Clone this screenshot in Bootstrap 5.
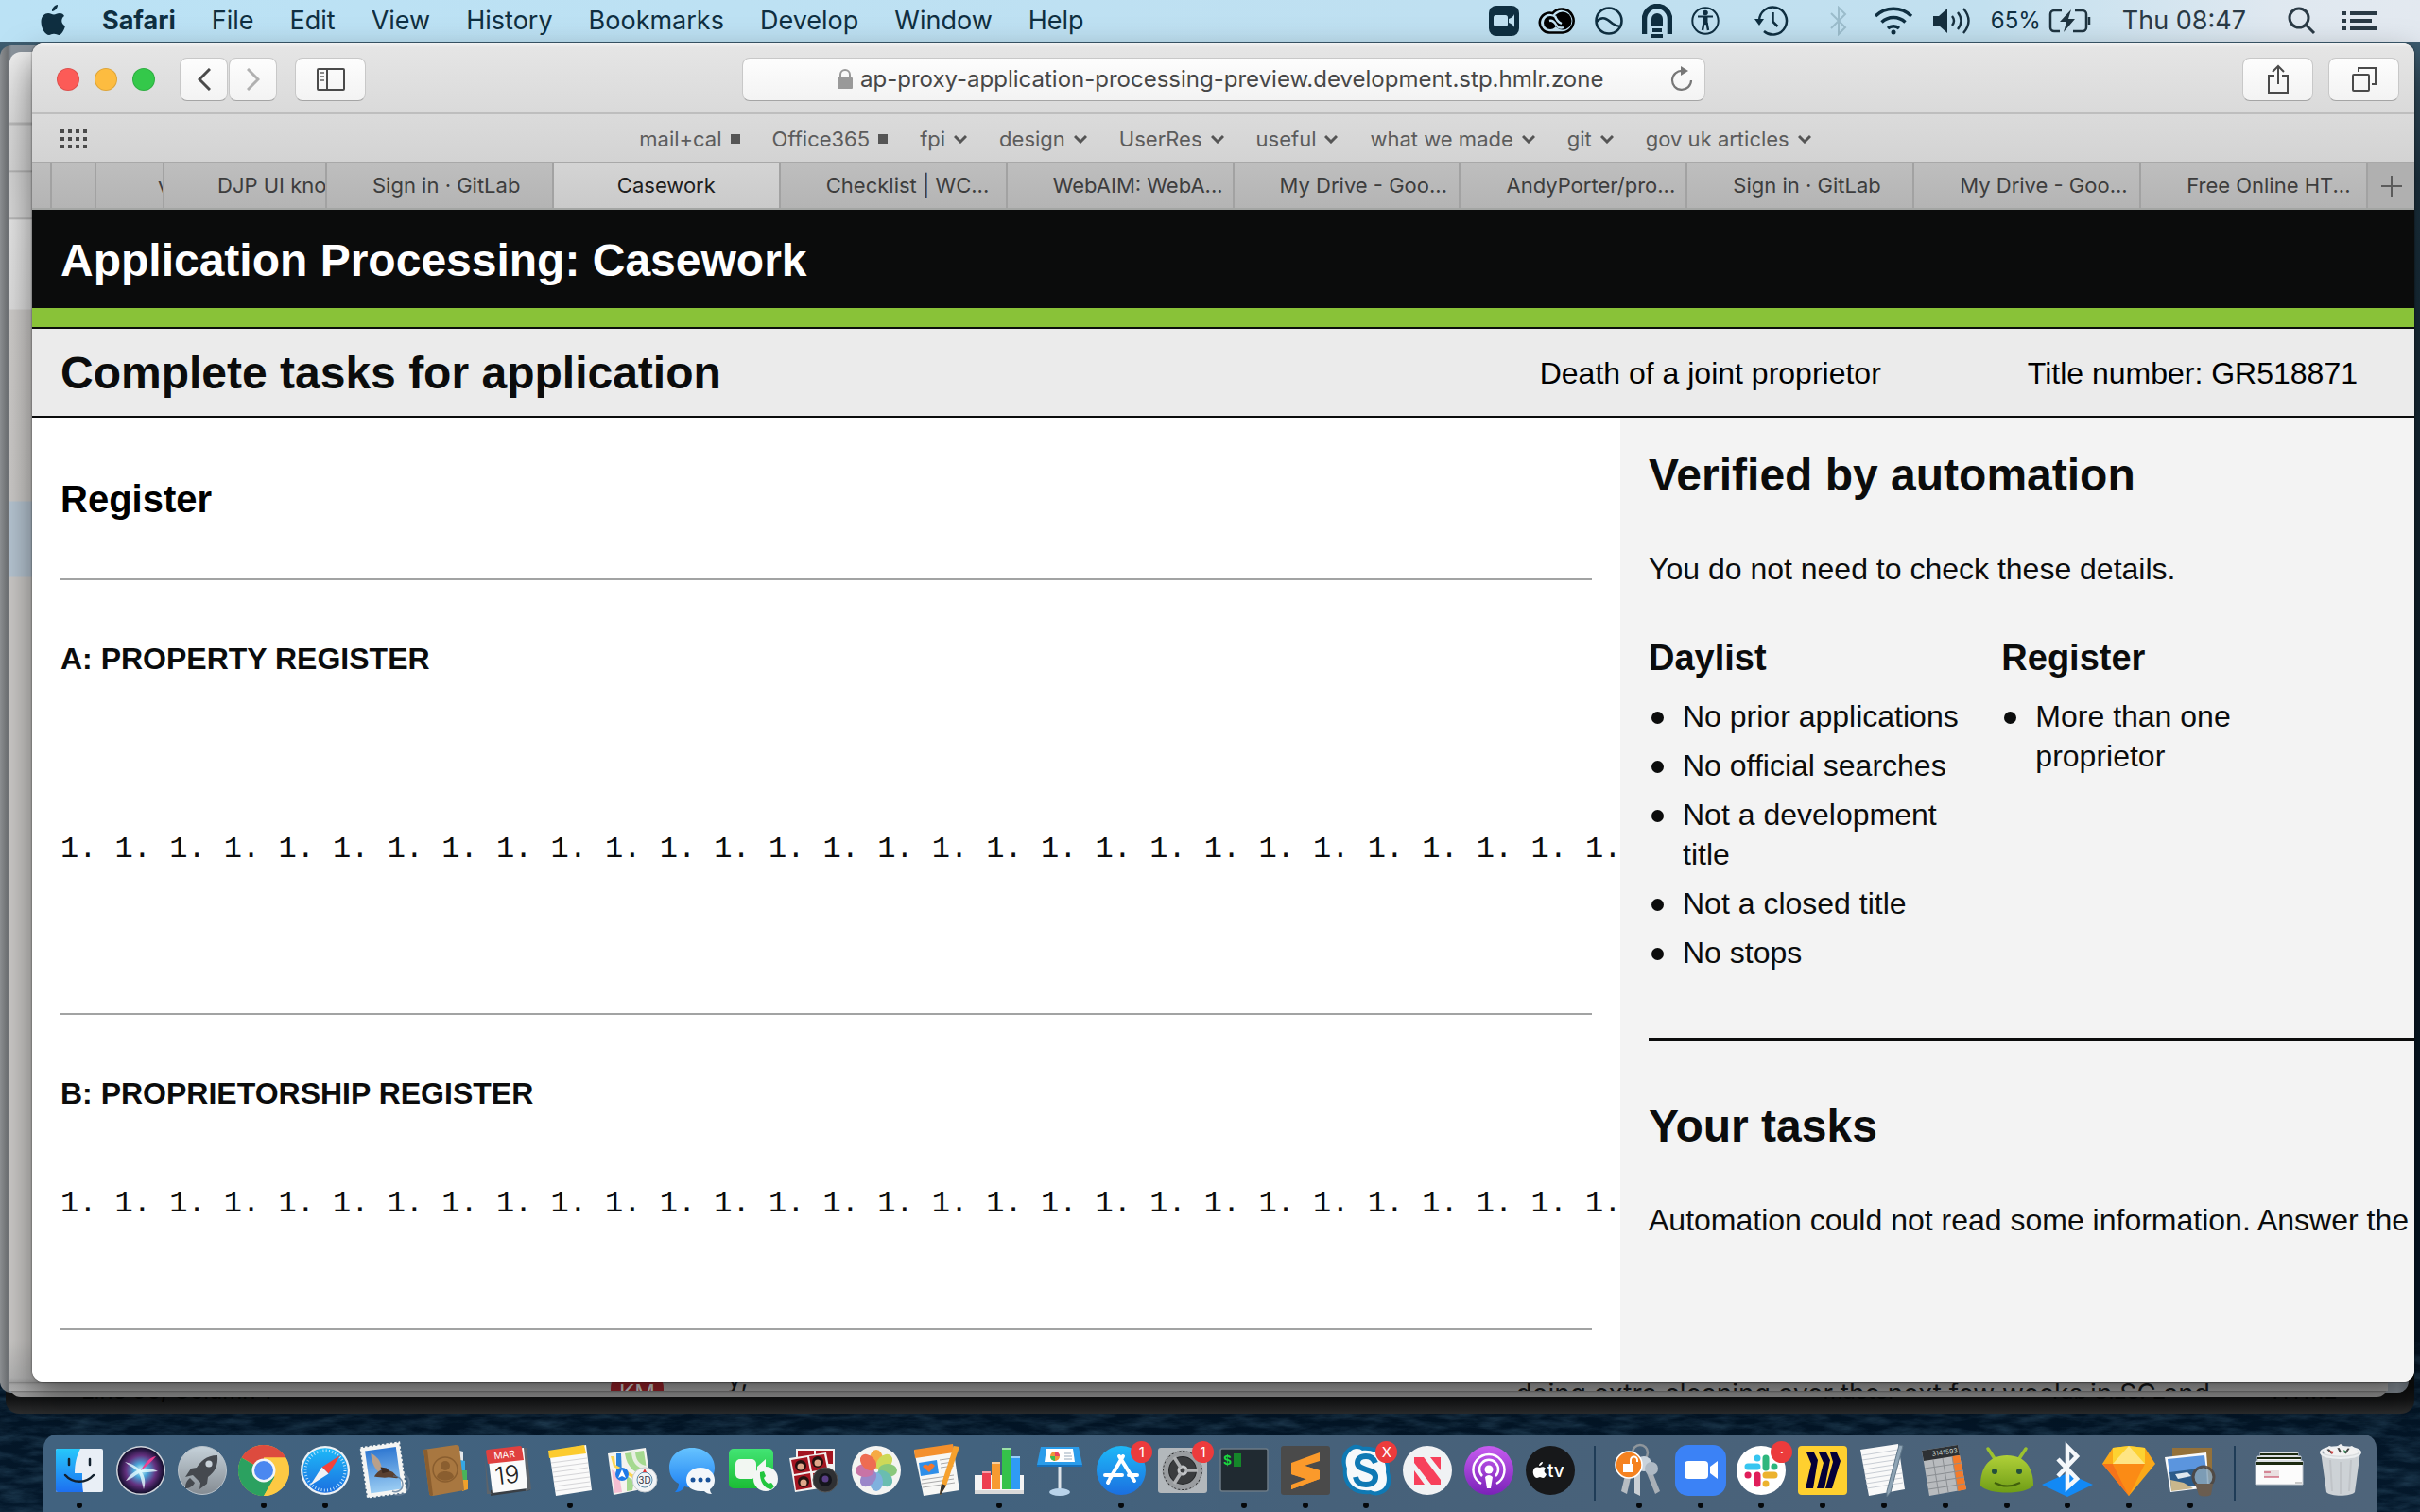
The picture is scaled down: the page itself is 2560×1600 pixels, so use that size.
<!DOCTYPE html>
<html lang="en">
<head>
<meta charset="utf-8">
<meta name="viewport" content="width=device-width, initial-scale=1">
<title>Casework</title>
<link href="https://cdn.jsdelivr.net/npm/bootstrap@5.3.0/dist/css/bootstrap.min.css" rel="stylesheet">
<style>
:root{--ui:Inter,"Noto Sans",sans-serif;--doc:"Liberation Sans",Arial,sans-serif;--ink:#0b0c0c}
body{font-family:var(--ui);background:linear-gradient(180deg,#47687d 0,#1d3442 12%,#0b1a24 50%,#031424 92%,#04182b 100%);overflow:hidden}
a{color:inherit;text-decoration:none}
button{font:inherit}
svg{display:block;flex:none}
.waves{position:absolute;inset:auto 0 0 0;width:100%;height:180px}
/* menu bar */
.menubar{height:44px;padding:0 46px 0 42px;font-size:27px;line-height:44px;color:#0f2f41;background:linear-gradient(90deg,#bbe2f5 0,#bfe0f1 60%,#c2e0ef 82%,#dfe8f0 94%,#e3e9f0 100%)}
.menus{gap:38px}
.status{gap:20px}
.status .pct{font-size:24px}
.status .clock{color:#2a3a45;padding:0 24px 0 12px}
/* windows behind */
.back{position:absolute}
.b-editor{left:6px;right:6px;top:200px;bottom:22px;border-radius:0 0 14px 14px;background:#2a2b2c linear-gradient(180deg,#0c0d0d calc(100% - 28px),#151617 calc(100% - 14px),#2d2e2f);font-size:24px;line-height:24px;color:#030404}
.b-editor .bar{position:absolute;inset:auto 0 12px 0;padding:0 82px 0 80px}
.b-grey{left:0;right:12px;top:4px;bottom:44px;border-radius:12px;background:linear-gradient(90deg,#8d9093 0,#6f7275 8px,#8b949d 12px,#8b949d calc(100% - 12px),#6c757e)}
.b-mail{left:10px;right:34px;top:11px;bottom:40px;border-radius:12px;background:linear-gradient(180deg,#efefef 0,#dcdcdc 74px,#bbb 75px,#bbb 77px,#dadada 78px,#d6d6d6 125px,#aaa 126px,#d4d4d4 128px,#d8d8d8 175px,#aaa 176px,#e6e6e6 178px,#dfdfdf 272px,#cfcdcb 273px,#cccac8 475px,#b7c6d3 476px,#b7c6d3 555px,#cccac8 556px,#cccac8 calc(100% - 60px),#b4b4b4 calc(100% - 20px),#777 calc(100% - 6px),#9d9d9d calc(100% - 4px))}
.b-mail .strip{position:absolute;inset:auto 0 6px 0;height:10px;overflow:hidden;padding:0 188px 0 636px;background:linear-gradient(180deg,#888,#aaa 4px,#b0b0b0);font-size:28px;line-height:26px;color:#16181a}
.km{flex:none;width:56px;height:56px;margin-top:-20px;border-radius:50%;background:#9f242c;color:#ddd;font-size:24px;line-height:66px;text-align:center}
.peek{margin-left:67px;line-height:10px;margin-top:-9px}
/* browser window */
.stage{padding:2px 6px 56px 34px;min-height:0}
.win{border-radius:12px;overflow:hidden;background:#fff;box-shadow:0 0 2px rgba(0,0,0,.7),0 16px 36px rgba(0,0,0,.5)}
.tools{flex:none;height:75px;padding:2px 16px 0;border-bottom:2px solid #bebebe;background:linear-gradient(180deg,#f4f4f4 0,#e5e5e5 4px,#dadada)}
.side{flex:1 1 0}
.lights{gap:16px;padding:0 26px 0 10px}
.light{width:24px;height:24px;border-radius:50%;border:1px solid rgba(0,0,0,.12);padding:0}
.tbtn{height:46px;padding:0;border:1px solid #c8c8c8;border-bottom-color:#a5a5a5;border-radius:8px;background:linear-gradient(180deg,#fdfdfd,#f3f3f3);display:flex;align-items:center;justify-content:center}
.w-nav{width:51px;margin-right:1px}.w-tool{width:75px}
.w-side{margin-left:18px}
.address{flex:0 1 1019px;height:46px;padding:0 12px;border:1px solid #c8c8c8;border-bottom-color:#a5a5a5;border-radius:8px;background:linear-gradient(180deg,#fdfdfd,#f3f3f3);color:#474747;font-size:24px}
.address input{border:0;background:none;outline:0;padding:0;color:inherit;font:inherit;width:790px}
.favs{flex:none;height:50px;padding:2px 26px 0;background:linear-gradient(180deg,#dbdbdb,#d3d3d3);color:#5c5c5c;font-size:22px}
.favs nav{gap:34px;padding-right:30px}
.favs a{display:flex;align-items:center;gap:9px;white-space:nowrap}
.sq{width:10px;height:10px;background:#555}
.tabs{flex:none;height:51px;border-top:2px solid #a8a8a8;border-bottom:2px solid #a3a5a3;background:linear-gradient(180deg,#bebebe,#b4b4b4);color:#3d3d3d;font-size:22px;line-height:47px}
.tabs a{flex:1 1 0;min-width:0;overflow:hidden;white-space:nowrap;border-right:2px solid #a2a2a2;padding-left:48px}
.tabs .on{background:linear-gradient(180deg,#d4d4d4,#cacaca);color:#1d1d1d;text-align:center;padding:0 24px}
.tabs .t1{flex:0 0 21px;padding:0}.tabs .t2{flex:0 0 47px;padding:0}.tabs .t3{flex:0 0 72px;padding-left:65px}.tabs .t4{flex:0 0 172px;padding-left:56px}
.tabs button{flex:0 0 49px;border:0;padding:0;background:#b0b0b0;display:flex;align-items:center;justify-content:center}
/* page */
.doc{flex:1 1 0;font-family:var(--doc);color:var(--ink);font-size:32px;line-height:42px;min-height:0;overflow:hidden}
.doc h1,.doc h2{font-size:48px;line-height:50px;font-weight:700;margin:0}
.doc h3{font-size:38px;line-height:46px;font-weight:700;margin:0 0 18px}
.doc p{margin:0}
.masthead{flex:none;background:var(--ink);color:#fff;padding:29px 30px 25px;border-bottom:20px solid #89c238;background-clip:padding-box}
.appbar{flex:none;background:#ebebeb;border-top:2px solid var(--ink);border-bottom:2px solid var(--ink);padding:22px 60px 20px 30px;color:#000}
.appbar h2{color:var(--ink)}
.facts{gap:155px}
.reg{padding:62px 0 0 30px;overflow:hidden;background:#fff}
.reg .ttl{font-size:40px;line-height:48px;color:#000}
.reg h3{font-size:32px;line-height:40px;margin:0}
.reg hr{border:0;border-top:2px solid #a2a3a3;opacity:1;margin:60px 30px 63px 0}
.reg pre{font-family:"Liberation Mono",monospace;font-size:32px;line-height:40px;margin:0;overflow:hidden;color:var(--ink)}
.reg .ga{padding:162px 0 93px}.reg .gb{padding:77px 0 51px}
.auto{padding:36px 0 0 30px;background:#f3f3f3;overflow:hidden}
.wide{width:1120px}
.wide h2{margin-bottom:53px}
.wide ul{padding-left:36px;margin:0;list-style:none}
.wide li{margin-bottom:10px;position:relative}
.wide li::before{content:"";position:absolute;left:-33px;top:16px;width:13px;height:13px;border-radius:50%;background:var(--ink)}
.wide hr{border:0;border-top:4px solid var(--ink);opacity:1;margin:59px 0 65px}
.wide .col-4{padding-right:30px}
.checks{margin-top:50px}
/* dock */
.dock{flex:none;height:82px;margin:0 46px;padding:0 6px;border-radius:14px 14px 0 0;background:linear-gradient(90deg,#41627f 0,#42627e 40%,#46617a 55%,#4e647a 100%)}
.dock .item{flex:1 1 0;min-width:0;position:relative;padding:9px 0 0}
.dock .item svg{margin:0 auto;overflow:visible}
.dock .run::after{content:"";width:6px;height:6px;border-radius:50%;background:#05080b;margin:5px auto 0;display:block}
.rule{flex:0 0 29px;padding-top:12px}
.rule::after{content:"";display:block;width:2px;height:58px;margin:0 auto;background:#1f3c57}
.bdg{position:absolute;top:7px;left:calc(50% + 10px);width:23px;height:23px;border-radius:50%;background:#ec3b3c;color:#fff;font-size:15px;line-height:23px;text-align:center}
</style>
</head>
<body class="vh-100 d-flex flex-column position-relative">
<svg class="waves" aria-hidden="true"><filter id="sea" x="0" y="0" width="100%" height="100%"><feTurbulence type="fractalNoise" baseFrequency=".03 .12" numOctaves="5" seed="7"/><feColorMatrix values="0 0 0 0 .1  0 0 0 0 .25  0 0 0 0 .38  1.4 0 0 0 -.5"/></filter><rect width="100%" height="100%" filter="url(#sea)" opacity=".4"/></svg>

<header class="menubar d-flex align-items-center justify-content-between position-relative">
  <nav class="menus d-flex align-items-center">
    <svg width="28" height="34" viewBox="0 0 28 34" fill="#0f2f41"><path d="M19 0c.3 3-2.600 6.800-6 7-.4-3.200 2.700-6.700 6-7zM26 12c-4 2.500-3.500 8.500 1 10.500-1 4-4 9.500-6.500 9.500-2 0-3-1.200-5.500-1.200S11.500 32 10 32C6 32 1.500 25 1.500 18c0-6 4-9 7.500-9 2.500 0 4 1.500 6 1.500 1.800 0 3.500-1.600 6.500-1.500 2 .1 3.700 1.200 4.500 3z"/></svg>
    <a href="#" class="fw-bold">Safari</a><a href="#">File</a><a href="#">Edit</a><a href="#">View</a><a href="#">History</a><a href="#">Bookmarks</a><a href="#">Develop</a><a href="#">Window</a><a href="#">Help</a>
  </nav>
  <div class="status d-flex align-items-center">
    <svg width="32" height="32" viewBox="0 0 32 32"><rect width="32" height="32" rx="8" fill="#0f2f41"/><rect x="5" y="10" width="15" height="12" rx="2.500" fill="#c0e0f0"/><path d="M21 14q5-2 6-5v14q-1-3-6-5z" fill="#c0e0f0"/></svg>
    <svg width="40" height="30" viewBox="0 0 40 30" fill="none"><path d="M12 27.500A10.500 10.500 0 1 1 15.500 7 12.500 12.500 0 1 1 26 27.500z" stroke="#000" stroke-width="2.600" fill="#c2e2f2"/><circle cx="13" cy="17" r="7" fill="#000"/><circle cx="26" cy="15" r="9.500" fill="#000"/><path d="M12 15q4-1 7 4t8 3M18 10q2 6 7 8" stroke="#c2e2f2" stroke-width="2.400"/></svg>
    <svg width="30" height="30" viewBox="0 0 30 30" fill="none" stroke="#0f2f41" stroke-width="2.600"><circle cx="15" cy="15" r="13.500"/><path d="M2 16c7-8 13-1 17 2 3 2 5 3 8 3"/></svg>
    <svg width="32" height="36" viewBox="0 0 32 36"><path d="M2.500 32V16a13.500 13.500 0 0 1 27 0v16" fill="none" stroke="#0f2f41" stroke-width="5.500"/><path d="M10 23v-7a6 6 0 0 1 12 0v7zM11 26h10v4H11zM10 32h12v4H10z" fill="#0f2f41"/></svg>
    <svg width="30" height="30" viewBox="0 0 30 30" fill="none" stroke="#0f2f41" stroke-width="2"><circle cx="15" cy="15" r="13.700"/><circle cx="15" cy="6.500" r="1.800" fill="#0f2f41"/><path d="M7 10.500h16" /><path d="M15 11v8" stroke-width="5"/><path d="M12 25l1.500-8M18 25l-1.500-8" stroke-width="2.400"/></svg>
    <svg class="mx-3" width="37" height="32" viewBox="0 0 37 32" fill="none" stroke="#0f2f41" stroke-width="2.500"><path d="M6 16A14.500 14.500 0 1 1 11 27"/><path d="M20.500 7v10l5 5"/><path d="M1 14h10l-5 7z" fill="#0f2f41" stroke="none"/></svg>
    <svg class="mx-2" width="18" height="32" viewBox="0 0 18 32" fill="none" stroke="#9bbccb" stroke-width="2"><path d="M1 8l15 15-7 7V2l7 7L1 24"/></svg>
    <svg width="42" height="30" viewBox="0 0 42 30" fill="none" stroke="#0f2f41" stroke-width="3.400"><path d="M2 10a27 27 0 0 1 38 0M8.500 16.500a18 18 0 0 1 25 0M15 23a9 9 0 0 1 12 0"/><circle cx="21" cy="27" r="2.500" fill="#0f2f41" stroke="none"/></svg>
    <svg width="42" height="30" viewBox="0 0 42 30" fill="none" stroke="#17303f" stroke-width="2.400"><path d="M1 10h6l9-8v26l-9-8H1z" fill="#17303f" stroke="none"/><path d="M21 10q4 5 0 10M27 6q7 9 0 18M33 2q11 13 0 26"/></svg>
    <span class="d-flex align-items-center gap-2"><span class="pct">65%</span>
    <svg width="46" height="26" viewBox="0 0 46 26" fill="none" stroke="#1f3440" stroke-width="2.500"><path d="M14 2H6a4 4 0 0 0-4 4v14a4 4 0 0 0 4 4h6M28 2h8a4 4 0 0 1 4 4v14a4 4 0 0 1-4 4H26M43 9v8"/><path d="M24 1l-12 13h7l-3 11 12-14h-7z" fill="#1f3440" stroke="none"/></svg></span>
    <span class="clock">Thu 08:47</span>
    <svg class="me-2" width="30" height="30" viewBox="0 0 30 30" fill="none" stroke="#2a3a45" stroke-width="3"><circle cx="12" cy="12" r="10"/><path d="M19 19l9 9"/></svg>
    <svg width="36" height="22" viewBox="0 0 36 22" stroke="#2a3a45" stroke-width="4"><path d="M0 3h4M8 3h28M0 11h4M8 11h23M0 19h4M8 19h28"/></svg>
  </div>
</header>

<main class="stage flex-grow-1 position-relative">
  <div class="back b-editor"><div class="bar d-flex"><span>Line 90, Column 1</span><span class="ms-auto me-5 pe-5">master</span><span class="mx-5 px-3">Tab Size: 2</span><span class="ms-5">HTML</span></div></div>
  <div class="back b-grey"></div>
  <div class="back b-mail"><div class="strip d-flex"><div class="km">KM</div><span class="peek">y,</span><span class="ms-auto">doing extra cleaning over the next few weeks in SC and</span></div></div>

  <section class="win h-100 d-flex flex-column position-relative">
    <div class="tools d-flex align-items-center">
      <div class="side d-flex align-items-center">
        <div class="lights d-flex">
          <button class="light" style="background:#fc5b57" aria-label="Close"></button>
          <button class="light" style="background:#fdbc40" aria-label="Minimise"></button>
          <button class="light" style="background:#34c84a" aria-label="Zoom"></button>
        </div>
        <button class="tbtn w-nav" aria-label="Back"><svg width="14" height="24" viewBox="0 0 14 24" fill="none" stroke="#4a4a4a" stroke-width="3"><path d="M13 1L2 12l11 11"/></svg></button>
        <button class="tbtn w-nav" aria-label="Forward"><svg width="14" height="24" viewBox="0 0 14 24" fill="none" stroke="#b0b0b0" stroke-width="3"><path d="M1 1l11 11L1 23"/></svg></button>
        <button class="tbtn w-tool w-side" aria-label="Sidebar"><svg width="30" height="24" viewBox="0 0 30 24" fill="none" stroke="#4a4a4a" stroke-width="2"><rect x="1" y="1" width="28" height="22" rx="1"/><path d="M11 1v22"/><path d="M4 5h4M4 9h4M4 13h4" stroke="#888"/></svg></button>
      </div>
      <div class="address d-flex align-items-center justify-content-between">
        <span style="width:22px"></span>
        <label class="d-flex align-items-center gap-2">
          <svg width="16" height="22" viewBox="0 0 16 22"><path d="M3 9V6a5 5 0 0 1 10 0v3" fill="none" stroke="#999" stroke-width="2"/><rect y="9" width="16" height="12" rx="1" fill="#999"/></svg>
          <input type="text" aria-label="Address" value="ap-proxy-application-processing-preview.development.stp.hmlr.zone">
        </label>
        <svg width="24" height="28" viewBox="0 0 24 28" fill="none" stroke="#777" stroke-width="2.200"><path d="M13 5a10 10 0 1 0 9 10"/><path d="M11 0l8 5-8 5z" fill="#777" stroke="none"/></svg>
      </div>
      <div class="side d-flex justify-content-end gap-3">
        <button class="tbtn w-tool" aria-label="Share"><svg width="24" height="32" viewBox="0 0 24 32" fill="none" stroke="#4a4a4a" stroke-width="2"><path d="M8 12H2v18h20V12h-6M12 21V3M6 8l6-6 6 6"/></svg></button>
        <button class="tbtn w-tool" aria-label="Tabs"><svg width="26" height="26" viewBox="0 0 26 26" fill="none" stroke="#4a4a4a" stroke-width="2"><rect x="1" y="8" width="17" height="17" rx="1"/><path d="M7 5V1h18v17h-4"/></svg></button>
      </div>
    </div>

    <div class="favs d-flex align-items-center">
      <svg class="ms-1" width="30" height="20" viewBox="0 0 30 20" stroke="#4a4a4a" stroke-width="4" stroke-dasharray="4 4"><path d="M0 2h30M0 10h30M0 18h30"/></svg>
      <nav class="d-flex mx-auto">
        <a href="#">mail+cal <span class="sq"></span></a><a href="#">Office365 <span class="sq"></span></a>
        <a href="#">fpi <svg width="14" height="10" viewBox="0 0 14 10" fill="none" stroke="#555" stroke-width="3"><path d="M1 2l6 6 6-6"/></svg></a>
        <a href="#">design <svg width="14" height="10" viewBox="0 0 14 10" fill="none" stroke="#555" stroke-width="3"><path d="M1 2l6 6 6-6"/></svg></a>
        <a href="#">UserRes <svg width="14" height="10" viewBox="0 0 14 10" fill="none" stroke="#555" stroke-width="3"><path d="M1 2l6 6 6-6"/></svg></a>
        <a href="#">useful <svg width="14" height="10" viewBox="0 0 14 10" fill="none" stroke="#555" stroke-width="3"><path d="M1 2l6 6 6-6"/></svg></a>
        <a href="#">what we made <svg width="14" height="10" viewBox="0 0 14 10" fill="none" stroke="#555" stroke-width="3"><path d="M1 2l6 6 6-6"/></svg></a>
        <a href="#">git <svg width="14" height="10" viewBox="0 0 14 10" fill="none" stroke="#555" stroke-width="3"><path d="M1 2l6 6 6-6"/></svg></a>
        <a href="#">gov uk articles <svg width="14" height="10" viewBox="0 0 14 10" fill="none" stroke="#555" stroke-width="3"><path d="M1 2l6 6 6-6"/></svg></a>
      </nav>
    </div>

    <div class="tabs d-flex">
      <a href="#" class="t1" aria-label="Tab 1"></a><a href="#" class="t2" aria-label="Tab 2"></a><a href="#" class="t3">v</a><a href="#" class="t4">DJP UI kno</a>
      <a href="#">Sign in · GitLab</a><a href="#" class="on">Casework</a><a href="#">Checklist | WC...</a><a href="#">WebAIM: WebA...</a><a href="#">My Drive - Goo...</a><a href="#">AndyPorter/pro...</a><a href="#">Sign in · GitLab</a><a href="#">My Drive - Goo...</a><a href="#">Free Online HT...</a>
      <button aria-label="New tab"><svg width="22" height="22" viewBox="0 0 22 22" stroke="#5c5c5c" stroke-width="2"><path d="M11 0v22M0 11h22"/></svg></button>
    </div>

    <div class="doc d-flex flex-column">
      <div class="masthead"><h1>Application Processing: Casework</h1></div>
      <div class="appbar d-flex align-items-center justify-content-between">
        <h2>Complete tasks for application</h2>
        <div class="facts d-flex"><span>Death of a joint proprietor</span><span>Title number: GR518871</span></div>
      </div>
      <div class="row g-0 flex-grow-1">
        <div class="col-8 reg">
          <h2 class="ttl">Register</h2>
          <hr>
          <h3>A: PROPERTY REGISTER</h3>
          <pre class="ga">1. 1. 1. 1. 1. 1. 1. 1. 1. 1. 1. 1. 1. 1. 1. 1. 1. 1. 1. 1. 1. 1. 1. 1. 1. 1. 1. 1. 1.</pre>
          <hr>
          <h3>B: PROPRIETORSHIP REGISTER</h3>
          <pre class="gb">1. 1. 1. 1. 1. 1. 1. 1. 1. 1. 1. 1. 1. 1. 1. 1. 1. 1. 1. 1. 1. 1. 1. 1. 1. 1. 1. 1. 1.</pre>
          <hr>
        </div>
        <div class="col-4 auto">
          <div class="wide">
            <h2>Verified by automation</h2>
            <p>You do not need to check these details.</p>
            <div class="row g-0 checks">
              <div class="col-4"><h3>Daylist</h3><ul><li>No prior applications</li><li>No official searches</li><li>Not a development title</li><li>Not a closed title</li><li>No stops</li></ul></div>
              <div class="col-4"><h3>Register</h3><ul><li>More than one proprietor</li></ul></div>
            </div>
            <hr>
            <h2>Your tasks</h2>
            <p>Automation could not read some information. Answer the</p>
          </div>
        </div>
      </div>
    </div>
  </section>
</main>

<footer class="dock d-flex position-relative">
  <a href="#" class="item run" title="Finder"><svg width="58" height="58" viewBox="0 0 58 58"><defs><linearGradient id="g1" x2="0" y2="1"><stop stop-color="#27c8fb"/><stop offset="1" stop-color="#1d6ff0"/></linearGradient></defs><rect x="4" y="6" width="50" height="46" rx="2" fill="#e9eff6"/><path d="M6 6h24c-4 8-6 16-6 26h8c0 8 0 14 1 20H6a2 2 0 0 1-2-2V8a2 2 0 0 1 2-2z" fill="url(#g1)"/><path d="M18 17v6M40 17v6M14 34c8 9 22 9 30 0" fill="none" stroke="#12202e" stroke-width="2.500" stroke-linecap="round"/></svg></a>
  <a href="#" class="item" title="Siri"><svg width="58" height="58" viewBox="0 0 58 58"><defs><radialGradient id="g2"><stop stop-color="#d8fbff"/><stop offset=".3" stop-color="#4aa6d8"/><stop offset=".65" stop-color="#63307e"/><stop offset="1" stop-color="#120e2c"/></radialGradient></defs><circle cx="29" cy="29" r="26" fill="#cfd3da"/><circle cx="29" cy="29" r="24.500" fill="url(#g2)"/><path d="M12 20c10 2 14 7 17 9 6-2 12-2 18 1-8 1-14 1-17 1 4 6 4 12 2 18-2-7-3-13-5-17-4 2-9 7-14 8 4-6 8-9 12-11-4-3-8-5-13-9z" fill="#e6fdff" opacity=".8"/><path d="M29 29c5-9 10-14 16-15-5 6-10 11-16 15z" fill="#ef3f91"/></svg></a>
  <a href="#" class="item" title="Launchpad"><svg width="58" height="58" viewBox="0 0 58 58"><defs><linearGradient id="g3" x2="0" y2="1"><stop stop-color="#c6d2da"/><stop offset="1" stop-color="#848b92"/></linearGradient></defs><circle cx="29" cy="29" r="25.500" fill="url(#g3)" stroke="#b9c3cb"/><path d="M45 13c-12 0-18 7-22 13l-6 1-6 9 8-2 8 8-1 7 8-6 1-7c7-5 11-12 10-23zM16 37c-4 3-5 7-5 11 4 0 8-2 10-6z" fill="#45494f"/><circle cx="36" cy="22" r="3.600" fill="#c9d2d9"/></svg></a>
  <a href="#" class="item run" title="Chrome"><svg width="58" height="58" viewBox="0 0 58 58"><circle cx="29" cy="29" r="27" fill="#fdc943"/><path d="M29 29L5.600 15.500A27 27 0 0 1 52.400 15.500H29z" fill="#dd4b3e"/><path d="M5.600 15.500A27 27 0 0 0 29 56l11.700-20.300L29 29z" fill="#2ba160"/><path d="M29 56a27 27 0 0 0 23.400-40.500H29L40.700 35.800z" fill="#fdc943"/><circle cx="29" cy="29" r="12.500" fill="#f3f5f7"/><circle cx="29" cy="29" r="10" fill="#4b88f0"/></svg></a>
  <a href="#" class="item run" title="Safari"><svg width="58" height="58" viewBox="0 0 58 58"><defs><linearGradient id="g4" x2="0" y2="1"><stop stop-color="#1eb9f8"/><stop offset="1" stop-color="#1b6fe0"/></linearGradient></defs><circle cx="29" cy="29" r="26" fill="#eef1f4"/><circle cx="29" cy="29" r="23.800" fill="url(#g4)"/><circle cx="29" cy="29" r="21" fill="none" stroke="#bfe3fb" stroke-width="3" stroke-dasharray="1 2.300"/><path d="M45 13L32.500 32.500 25.500 25.500z" fill="#f4423a"/><path d="M13 45l12.500-19.500 7 7z" fill="#f0f2f5"/></svg></a>
  <a href="#" class="item" title="Mail"><svg width="58" height="58" viewBox="0 0 58 58"><defs><linearGradient id="g5" x2="0" y2="1"><stop stop-color="#2a74d0"/><stop offset="1" stop-color="#9fd0f4"/></linearGradient></defs><circle cx="42" cy="43" r="12" fill="none" stroke="#5c7690" stroke-width="2"/><g transform="rotate(-8 27 28)"><rect x="8" y="4" width="37" height="49" fill="url(#g5)" stroke="#f5f5f3" stroke-width="4"/><rect x="6" y="2" width="41" height="53" fill="none" stroke="#f5f5f3" stroke-width="2" stroke-dasharray="2.500 2"/><path d="M16 9c6 5 9 9 9 17l-4 4c-4-6-6-13-5-21z" fill="#b9a08a"/><path d="M16 34c4-5 9-7 13-6l7 4 5 7-2 0-8-2c-4 0-9-1-15-3z" fill="#5a4030"/><path d="M24 25l6 2 3 4-8 1z" fill="#3d2a20"/></g><path d="M37 35a9 9 0 0 1 10 9c0 6-6 9-11 7" fill="none" stroke="#4c6b8c" stroke-width="1.500" opacity=".7"/></svg></a>
  <a href="#" class="item" title="Contacts"><svg width="58" height="58" viewBox="0 0 58 58"><path d="M42 8l4 1v10l-4 1z" fill="#e4e8ec"/><path d="M43 18l5 1v10h-5z" fill="#35a7e6"/><path d="M44 29h6v10h-6z" fill="#48b45a"/><path d="M45 39h6v10l-6 2z" fill="#f0a12c"/><path d="M4 7l34-5c3 0 4 1 4 3l5 45-33 6c-3 0-4-1-4-3z" fill="#a87740"/><path d="M4 7l4 0 6 48-1 1c-2 0-3-1-3-3z" fill="#8a5e2f"/><circle cx="27" cy="28" r="13" fill="none" stroke="#8a5e2f" stroke-width="1.500"/><circle cx="27" cy="24" r="5" fill="#8a5e2f"/><path d="M18 36c1-8 17-8 18 0-5 5-13 5-18 0z" fill="#8a5e2f"/></svg></a>
  <a href="#" class="item" title="Calendar"><svg width="58" height="58" viewBox="0 0 58 58"><path d="M10 50l40-6 2 6-42 6z" fill="#3a3f45"/><path d="M44 5l4 0 5 44-6 2zM4 14l4 36 3 4-5 0z" fill="#5d646b"/><path d="M7 10l38-5 4 43-37 5z" fill="#fbfbfb"/><path d="M5 9q0-2 2-2l34-4q2 0 2 2l2 13-38 4z" fill="#e0403f"/><text x="25" y="16" font-size="10" fill="#fff" text-anchor="middle" font-family="Inter" transform="rotate(-7 25 16)">MAR</text><text x="28" y="43" font-size="26" fill="#222" text-anchor="middle" font-family="Inter" font-weight="300" transform="rotate(-7 28 38)">19</text></svg></a>
  <a href="#" class="item run" title="Notes"><svg width="58" height="58" viewBox="0 0 58 58"><path d="M7 9l39-7 6 48-38 6z" fill="#fafafa"/><path d="M6 8l38-6 2 9-39 5z" fill="#fccb2e"/><path d="M9 21l38-5M10 26l38-5M11 31l37-5M11 36l38-5M12 41l38-5M12 46l38-5M13 51l38-5" stroke="#d5d5d8"/></svg></a>
  <a href="#" class="item" title="Maps"><svg width="58" height="58" viewBox="0 0 58 58"><path d="M4 11l40-6 6 42-40 8z" fill="#f5f4f0"/><path d="M22 11l20-3 4 26c-12 0-22-8-24-23z" fill="#a5d98f"/><path d="M31 8c0 12 6 17 14 18" fill="none" stroke="#e8efe2" stroke-width="4"/><path d="M13 11h5l1 22-6 2z" fill="#2d83d8"/><path d="M7 14l4 0 1 9 36 20-1 4-37-22z" fill="#fbd551"/><path d="M8 28l8 6 3 18-8 1z" fill="#f6bfd3"/><path d="M24 35l8 5-2 10-6 1z" fill="#a5d98f"/><circle cx="19" cy="33" r="7" fill="#1f7be8"/><path d="M19 28l4 9-4-2-4 2z" fill="#fff"/><circle cx="43" cy="39" r="13" fill="#f2f4f6" stroke="#c8ccd0"/><circle cx="43" cy="39" r="8" fill="none" stroke="#5c8aa8"/><path d="M43 27l2 4h-4z" fill="#d33"/><text x="43" y="43" font-size="10" text-anchor="middle" fill="#334" font-family="Inter">3D</text></svg></a>
  <a href="#" class="item" title="Messages"><svg width="58" height="58" viewBox="0 0 58 58"><defs><linearGradient id="g6" x2="0" y2="1"><stop stop-color="#66c3ff"/><stop offset="1" stop-color="#1a7df2"/></linearGradient></defs><path d="M28 5c14 0 24 9 24 21S42 47 28 47c-3 0-5 0-8-1-2 4-5 6-10 6 3-3 4-6 4-9C7 39 4 33 4 26 4 14 14 5 28 5z" fill="url(#g6)"/><path d="M37 26c9 0 15 6 15 13 0 5-2 8-5 10 0 2 1 4 2 5-4 0-6-1-8-3h-4c-9 0-15-5-15-12s6-13 15-13z" fill="#f3f7fb"/><circle cx="29" cy="39" r="2.500" fill="#19529a"/><circle cx="37" cy="39" r="2.500" fill="#19529a"/><circle cx="45" cy="39" r="2.500" fill="#19529a"/></svg></a>
  <a href="#" class="item" title="FaceTime"><svg width="58" height="58" viewBox="0 0 58 58"><defs><linearGradient id="g7" x2="0" y2="1"><stop stop-color="#42e474"/><stop offset="1" stop-color="#1bbd35"/></linearGradient></defs><rect x="3" y="6" width="47" height="42" rx="5" fill="url(#g7)"/><rect x="10" y="17" width="22" height="21" rx="5" fill="#f2f7f2"/><path d="M33 25l9-8v18l-9-6z" fill="#f2f7f2"/><circle cx="42" cy="38" r="13" fill="#f4f6f5"/><path d="M36 31l4-1 2 5-2 2c1 3 3 5 5 6l3-1 3 4-3 3c-7 0-13-9-12-18z" fill="#22c63e"/></svg></a>
  <a href="#" class="item" title="Photo Booth"><svg width="58" height="58" viewBox="0 0 58 58"><path d="M9 6h41v28H9z" fill="#f3f1f0"/><path d="M11 8h17v12H11zM30 8h18v14H30z" fill="#a31420"/><path d="M2 16l39-6 7 36-40 6z" fill="#f3f1f0"/><g fill="#a31420"><path d="M4 18l17-3 3 15-17 3zM23 14l16-2 3 15-16 3zM7 35l17-3 2 15-17 3zM27 32l16-2 2 13-16 3z"/></g><g fill="#23110f"><circle cx="14" cy="24" r="6"/><circle cx="32" cy="20" r="6"/><circle cx="17" cy="41" r="6"/></g><g fill="#e0a78a"><circle cx="14" cy="25" r="3.500"/><circle cx="32" cy="21" r="3.500"/><circle cx="17" cy="42" r="3.500"/></g><circle cx="40" cy="39" r="13" fill="#2f3033" stroke="#555"/><circle cx="40" cy="39" r="7" fill="#14151c"/><circle cx="40" cy="38" r="3.500" fill="#5a3f86"/></svg></a>
  <a href="#" class="item" title="Photos"><svg width="58" height="58" viewBox="0 0 58 58"><circle cx="29" cy="29" r="26" fill="#f4f4f2"/><g opacity=".88"><ellipse cx="29" cy="17" rx="7" ry="10" fill="#f7a02b"/><ellipse cx="29" cy="17" rx="7" ry="10" fill="#c9d643" transform="rotate(45 29 29)"/><ellipse cx="29" cy="17" rx="7" ry="10" fill="#7cc26b" transform="rotate(90 29 29)"/><ellipse cx="29" cy="17" rx="7" ry="10" fill="#57b6a8" transform="rotate(135 29 29)"/><ellipse cx="29" cy="17" rx="7" ry="10" fill="#6fa8dc" transform="rotate(180 29 29)"/><ellipse cx="29" cy="17" rx="7" ry="10" fill="#8e78c4" transform="rotate(225 29 29)"/><ellipse cx="29" cy="17" rx="7" ry="10" fill="#c3639c" transform="rotate(270 29 29)"/><ellipse cx="29" cy="17" rx="7" ry="10" fill="#ee5a3c" transform="rotate(315 29 29)"/></g></svg></a>
  <a href="#" class="item" title="Pages"><svg width="58" height="58" viewBox="0 0 58 58"><path d="M4 8l41-6 7 48-38 6z" fill="#f7f7f5"/><path d="M4 7l41-6 1 9-41 6z" fill="#f4902c"/><path d="M9 21l19-3 2 14-19 3z" fill="#2f8fe8"/><path d="M20 31l-7-6q2-4 6-1 3-5 7 0z" fill="#f4772c"/><path d="M31 18l14-2M32 22l13-2M32 26l14-2M12 39l34-5M12 43l34-5M13 47l34-5" stroke="#aaa"/><path d="M46 3l6 1-14 41-6 10-1-1 2-11z" fill="#f6a12d"/><path d="M33 43l5 2-6 10-1-1z" fill="#333"/></svg></a>
  <a href="#" class="item run" title="Numbers"><svg width="58" height="58" viewBox="0 0 58 58"><path d="M3 34h52v20H3z" fill="#f4f4f4"/><path d="M3 50h52v4H3z" fill="#dadada"/><path d="M11 30h9v19h-9z" fill="#ee3e50"/><path d="M21 20h9v29h-9z" fill="#f79a31"/><path d="M32 5h9v44h-9z" fill="#35c24a"/><path d="M42 14h9v35h-9z" fill="#2f9bf4"/><path d="M11 30h9v2h-9zM21 20h9v2h-9zM32 5h9v2h-9zM42 14h9v2h-9z" fill="#fff" opacity=".5"/></svg></a>
  <a href="#" class="item" title="Keynote"><svg width="58" height="58" viewBox="0 0 58 58"><rect x="27.500" y="25" width="3" height="27" fill="#dde3e9"/><ellipse cx="29" cy="52" rx="11" ry="4" fill="#b9d3ea"/><path d="M9 4h40l4 19H5z" fill="#2a9cea"/><path d="M5 23h48v2H5z" fill="#1770ba"/><path d="M15 6h28l2 14H13z" fill="#fff"/><circle cx="24" cy="14" r="5" fill="#f0963a"/><path d="M24 14V9a5 5 0 0 1 5 5z" fill="#ea4360"/><path d="M24 14h-5a5 5 0 0 0 5 5z" fill="#3bbf52"/><path d="M34 11h7M34 14h8M34 17h8" stroke="#9ab"/></svg></a>
  <a href="#" class="item run" title="App Store"><svg width="58" height="58" viewBox="0 0 58 58"><circle cx="29" cy="29" r="26" fill="url(#g4)"/><path d="M31 14L17 38M27 14l16 26M12 34h18M37 34h9M16 40l-1 2" stroke="#fff" stroke-width="4" stroke-linecap="round"/></svg><span class="bdg">1</span></a>
  <a href="#" class="item" title="System Preferences"><svg width="58" height="58" viewBox="0 0 58 58"><rect x="3" y="5" width="52" height="48" rx="3" fill="#b3b8bc"/><circle cx="29" cy="29" r="21" fill="#26282a"/><circle cx="29" cy="29" r="17.500" fill="none" stroke="#9a9da0" stroke-width="5"/><circle cx="29" cy="29" r="20" fill="none" stroke="#9a9da0" stroke-width="3" stroke-dasharray="2 2"/><circle cx="29" cy="29" r="14" fill="#3a3c3e"/><circle cx="29" cy="29" r="4" fill="none" stroke="#c4c6c8" stroke-width="3"/><path d="M32 29h13M27 32l-7 11M27 26l-7-11" stroke="#aeb0b2" stroke-width="3.500"/></svg><span class="bdg">1</span></a>
  <a href="#" class="item run" title="Terminal"><svg width="58" height="58" viewBox="0 0 58 58"><rect x="4" y="6" width="50" height="45" rx="2" fill="#202a31" stroke="#6b7a85" stroke-width="1.500"/><text x="7" y="23" font-size="15" font-weight="700" fill="#19d93f" font-family="Liberation Mono">$</text><rect x="18" y="11" width="8" height="14" fill="#15862a"/></svg></a>
  <a href="#" class="item run" title="Sublime Text"><svg width="58" height="58" viewBox="0 0 58 58"><rect x="3" y="3" width="52" height="52" rx="3" fill="#4a4a4a"/><path d="M44 10L14 21v12l18 6-18 6v4l30-11V29l-16-5 16-5z" fill="#fb9a2b"/><path d="M14 38l16 0-16 6v5l30-11V29l-16-5-14-3v12l16 5z" fill="#fb9a2b"/></svg></a>
  <a href="#" class="item run" title="Skype for Business"><svg width="58" height="58" viewBox="0 0 58 58"><path d="M12 4c5-4 11-2 14 0 20-2 30 14 28 27 3 9 1 18-6 22-6 3-10 3-15 1C13 56 3 42 5 27 1 17 5 8 12 4z" fill="#0f79b4"/><path d="M15 7c4-2 8-1 10 1 17-2 27 11 25 23 2 8 1 14-4 18-5 3-9 3-12 1C17 52 7 41 9 27c-3-8-1-16 6-20z" fill="#f6f9fb"/><path d="M39 21c-2-5-6-7-10-7-6 0-9 3-9 7 0 9 19 5 19 15 0 5-4 8-10 8s-10-3-11-8" fill="none" stroke="#0f79b4" stroke-width="6"/></svg><span class="bdg">X</span></a>
  <a href="#" class="item" title="News"><svg width="58" height="58" viewBox="0 0 58 58"><circle cx="29" cy="29" r="26" fill="#f0f2f4"/><path d="M15 15h10l18 24v5H33L15 21zM32 15h11v14zM15 29l11 15H15z" fill="#f7405b"/></svg></a>
  <a href="#" class="item" title="Podcasts"><svg width="58" height="58" viewBox="0 0 58 58"><defs><linearGradient id="g8" x2="0" y2="1"><stop stop-color="#c75cf0"/><stop offset="1" stop-color="#7a22b8"/></linearGradient></defs><circle cx="29" cy="29" r="26" fill="url(#g8)"/><g fill="none" stroke="#fff" stroke-width="2.500"><path d="M21 43a16.500 16.500 0 1 1 16 0"/><path d="M22 35a10 10 0 1 1 14 0"/></g><circle cx="29" cy="28" r="4.500" fill="#fff"/><path d="M25 36q4-4 8 0l-2 12h-4z" fill="#fff"/></svg></a>
  <a href="#" class="item" title="TV"><svg width="58" height="58" viewBox="0 0 58 58"><circle cx="29" cy="29" r="26" fill="#17181a"/><path d="M21 20c0 2-2 4-4 4 0-2 2-4 4-4zM24 27c-2 2-2 4 1 6-1 2-2 4-4 4l-3-1-3 1c-3 0-5-5-4-8 1-4 4-4 7-3 2-1 5-1 6 1z" fill="#fff"/><text x="26" y="36" font-size="19" fill="#fff" font-family="Inter" font-weight="500">tv</text></svg></a>
  <span class="rule"></span>
  <a href="#" class="item run" title="Keychain Access"><svg width="58" height="58" viewBox="0 0 58 58"><circle cx="30" cy="10" r="8" fill="none" stroke="#8f969c" stroke-width="2.500"/><path d="M16 26l6 2-6 26-6-3z" fill="#b6bcc2"/><path d="M24 24h6v32l-6-3z" fill="#cbd0d5"/><path d="M33 22l6-1 12 30-5 3z" fill="#a9b0b7"/><circle cx="34" cy="22" r="8" fill="#c9d3dc"/><circle cx="42" cy="27" r="7" fill="#aeb9c4"/><circle cx="18" cy="23" r="14" fill="#f58220" stroke="#fff" stroke-width="1.500"/><rect x="12" y="22" width="11" height="9" fill="#fff"/><path d="M20 22v-4a3.500 3.500 0 0 1 7 0v2" fill="none" stroke="#fff" stroke-width="2"/></svg></a>
  <a href="#" class="item run" title="Zoom"><svg width="58" height="58" viewBox="0 0 58 58"><rect x="2" y="2" width="54" height="54" rx="14" fill="#3b82f6"/><rect x="12" y="19" width="25" height="19" rx="4" fill="#fff"/><path d="M39 25l8-6v19l-8-6z" fill="#fff"/></svg></a>
  <a href="#" class="item run" title="Slack"><svg width="58" height="58" viewBox="0 0 58 58"><circle cx="29" cy="29" r="26" fill="#fff"/><g stroke-width="7" stroke-linecap="round"><path d="M25 16v.1M15 25h10" stroke="#36c5f0"/><path d="M34 16v10M43 25h-.1" stroke="#2eb67d"/><path d="M34 34h9M34 43v-.1" stroke="#ecb22e"/><path d="M25 34v9M15 34h.1" stroke="#e01e5a"/></g></svg><span class="bdg">·</span></a>
  <a href="#" class="item run" title="Miro"><svg width="58" height="58" viewBox="0 0 58 58"><rect x="3" y="3" width="52" height="52" rx="4" fill="#ffd02f"/><path d="M12 10h8l4 8-5 30h-8l6-26zM25 10h8l4 8-6 30h-8l7-27zM37 10h7l4 9-9 29h-7l8-28z" fill="#050038"/></svg></a>
  <a href="#" class="item run" title="TextEdit"><svg width="58" height="58" viewBox="0 0 58 58"><path d="M4 7l40-6 7 48-38 7z" fill="#f9f9f9"/><path d="M6 13l38-6M6 18l39-6M7 23l39-6M8 28l38-6M9 33l38-6M9 38l39-6M10 43l38-6M11 48l38-6" stroke="#c8cdd4"/><path d="M45 2l4 1-13 49-4 5 0-6z" fill="#8ea4b5" stroke="#5f7688"/></svg></a>
  <a href="#" class="item run" title="Calculator"><svg width="58" height="58" viewBox="0 0 58 58"><path d="M4 8l38-6 9 47-39 7z" fill="#b8bbbe"/><path d="M4 8l38-6 2 11-38 6z" fill="#2d3134"/><path d="M36 14l8-1 7 36-9 2z" fill="#f47b2a"/><text x="15" y="14" font-size="7" fill="#c9d1c9" font-family="Inter" transform="rotate(-8 15 14)">3141593</text><path d="M7 27l39-6M9 35l39-6M10 42l39-6M11 49l39-6M16 18l6 36M26 16l6 36M36 14l6 37" stroke="#8a8e92"/></svg></a>
  <a href="#" class="item run" title="Android File Transfer"><svg width="58" height="58" viewBox="0 0 58 58"><defs><linearGradient id="g9" x2="0" y2="1"><stop stop-color="#b0d038"/><stop offset="1" stop-color="#6f9d16"/></linearGradient></defs><path d="M9 6l8 12M49 6l-8 12" stroke="#9cc22e" stroke-width="3.500" stroke-linecap="round"/><path d="M1 45c0-18 8-32 28-32s28 14 28 32c-8 10-48 10-56 0z" fill="url(#g9)"/><circle cx="16" cy="30" r="3" fill="#24503c"/><circle cx="42" cy="30" r="3" fill="#24503c"/><path d="M16 42q13 7 27 0" fill="none" stroke="#40600c" stroke-width="2"/></svg></a>
  <a href="#" class="item run" title="Bluetooth File Exchange"><svg width="58" height="58" viewBox="0 0 58 58"><path d="M29 32l27 12-27 13L2 44z" fill="#1289f5"/><path d="M19 17l20 21-10 9V4l10 10-20 21" fill="none" stroke="#f5f8fb" stroke-width="4.500"/></svg></a>
  <a href="#" class="item run" title="Sketch"><svg width="58" height="58" viewBox="0 0 58 58"><path d="M12 5l17-2 17 2 11 17-28 34L1 22z" fill="#fba919"/><path d="M12 5l17-2 17 2 0 17H12z" fill="#fdd231"/><path d="M29 3L12 22h34z" fill="#fee584"/><path d="M12 22h34L29 56z" fill="#fb8b15"/><path d="M1 22h11l17 34z" fill="#f6731b"/></svg></a>
  <a href="#" class="item run" title="Preview"><svg width="58" height="58" viewBox="0 0 58 58"><path d="M10 5h42v34H10z" fill="#94713a"/><path d="M2 15l44-5 3 37-41 5z" fill="#fafafa"/><path d="M5 17l39-4 2 16-39 4z" fill="#5b95de"/><path d="M7 31l39-5 1 18-38 5z" fill="#2c5c8a"/><path d="M8 39l14 3 10 6-23 3z" fill="#c9b78c"/><path d="M13 33l13-2 4 4-14 3z" fill="#dfe9ee"/><circle cx="43" cy="36" r="11" fill="#8ba8bd" opacity=".85" stroke="#50463e" stroke-width="3"/><path d="M34 43h19l-2 12q-7 3-13 0z" fill="#6a5d50"/></svg></a>
  <span class="rule"></span>
  <a href="#" class="item" title="Documents"><svg width="58" height="58" viewBox="0 0 58 58"><g fill="#fcfcfc" stroke="#bcc3ca"><path d="M9 10h40v10H9z"/><path d="M6 14h46v12H6z"/><path d="M4 19h50v25H4z"/></g><path d="M9 11h40v2H9zM6 15h46v2H6zM4 20h50v3H4z" fill="#1c2a10"/><path d="M13 29h16v7H13z" fill="#eadfe0"/><path d="M13 31h7M13 36h16" stroke="#c0304f"/><path d="M46 42h7" stroke="#999"/></svg></a>
  <a href="#" class="item" title="Trash"><svg width="58" height="58" viewBox="0 0 58 58"><path d="M10 8l7-5 6 2 6-4 6 4 6-2 8 6-5 7H14z" fill="#f2f2f2"/><path d="M15 6l5 5M26 4l3 6M38 5l-4 6" stroke="#444" stroke-width="2"/><path d="M17 8l5 1-2 3z" fill="#d64545"/><path d="M32 7l4 2-3 2z" fill="#3c8a5c"/><path d="M8 9c8 6 34 6 42 0l-6 43c-4 5-26 5-30 0z" fill="#d7dadd" opacity=".93"/><path d="M18 18l2 33M29 20v34M40 18l-2 33" stroke="#c0c4c8" stroke-width="2"/><ellipse cx="29" cy="10" rx="21" ry="6" fill="none" stroke="#eceff1" stroke-width="2"/></svg></a>
</footer>
<script src="https://cdn.jsdelivr.net/npm/bootstrap@5.3.0/dist/js/bootstrap.bundle.min.js"></script>
</body>
</html>
